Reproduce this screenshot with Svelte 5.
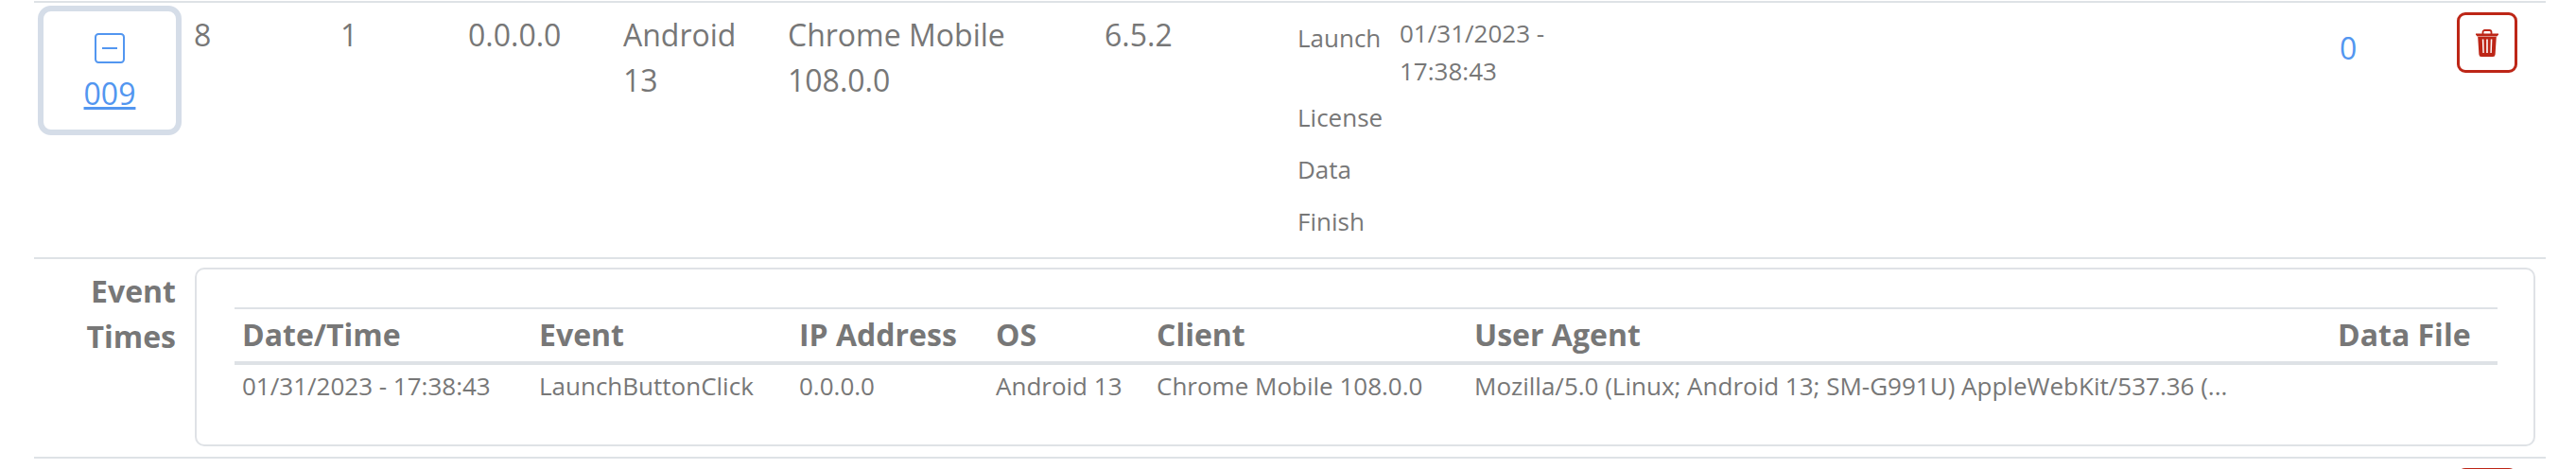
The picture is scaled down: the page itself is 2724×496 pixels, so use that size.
<script>
  const timeRows = [
    { label: 'Launch', value: '01/31/2023 - 17:38:43' },
    { label: 'License', value: '' },
    { label: 'Data', value: '' },
    { label: 'Finish', value: '' }
  ];

  const eventCols = ['Date/Time', 'Event', 'IP Address', 'OS', 'Client', 'User Agent', 'Data File'];
  const eventWidths = [313, 275, 208, 170, 336, 913, 178];
  const eventRow = [
    '01/31/2023 - 17:38:43',
    'LaunchButtonClick',
    '0.0.0.0',
    'Android 13',
    'Chrome Mobile 108.0.0',
    'Mozilla/5.0 (Linux; Android 13; SM-G991U) AppleWebKit/537.36 (...',
    ''
  ];
</script>

{#snippet trash()}
  <svg class="trash" viewBox="0 0 24 29" aria-hidden="true">
    <path d="M7.5 5V3a2 2 0 0 1 2-2h5a2 2 0 0 1 2 2v2" fill="none" stroke="currentColor" stroke-width="1.8" />
    <path d="M0 4.5h24v1.2l-1.6 1.8H1.600L0 5.700z" fill="currentColor" />
    <path
      fill-rule="evenodd"
      fill="currentColor"
      d="M2.200 8h19.600l-1.200 18.500a2.600 2.600 0 0 1-2.600 2.500H6a2.600 2.600 0 0 1-2.600-2.500zM6.800 10.500l.6 14.500h1.400l-.4-14.500zM11.200 10.500V25h1.600V10.500zM15.800 10.500l-.4 14.500h1.400l.6-14.500z"
    />
  </svg>
{/snippet}

<div class="page">
  <table class="log">
    <colgroup>
      <col style="width: 169px" />
      <col style="width: 155px" />
      <col style="width: 135px" />
      <col style="width: 164px" />
      <col style="width: 174px" />
      <col style="width: 335px" />
      <col style="width: 204px" />
      <col style="width: 1102px" />
      <col style="width: 124px" />
      <col style="width: 94px" />
    </colgroup>
    <tbody>
      <tr>
        <td class="toggle-cell">
          <div class="toggle">
            <svg class="dash" viewBox="0 0 16 16" aria-hidden="true">
              <rect x="0.500" y="0.500" width="15" height="15" rx="1.600" fill="none" stroke="currentColor" stroke-width="1" />
              <path d="M4 8h8" stroke="currentColor" stroke-width="1" />
            </svg>
            <a href="#009">009</a>
          </div>
        </td>
        <td>8</td>
        <td>1</td>
        <td>0.0.0.0</td>
        <td class="os">Android 13</td>
        <td>Chrome Mobile 108.0.0</td>
        <td>6.5.2</td>
        <td class="times-cell">
          <div class="times">
            {#each timeRows as row}
              <span class="time-label">{row.label}</span>
              <span class="time-value">{row.value}</span>
            {/each}
          </div>
        </td>
        <td class="count"><a href="#0">0</a></td>
        <td><button class="delete" aria-label="Delete">{@render trash()}</button></td>
      </tr>
      <tr>
        <td colspan="10" class="detail-cell">
          <div class="detail">
            <div class="detail-label">Event Times</div>
            <div class="card">
              <table class="events">
                <colgroup>
                  {#each eventWidths as w}
                    <col style="width: {w}px" />
                  {/each}
                </colgroup>
                <thead>
                  <tr>
                    {#each eventCols as col}
                      <th>{col}</th>
                    {/each}
                  </tr>
                </thead>
                <tbody>
                  <tr>
                    {#each eventRow as value}
                      <td>{value}</td>
                    {/each}
                  </tr>
                </tbody>
              </table>
            </div>
          </div>
        </td>
      </tr>
      <tr>
        <td colspan="9"></td>
        <td><button class="delete" aria-label="Delete">{@render trash()}</button></td>
      </tr>
    </tbody>
  </table>
</div>

<style>
  :global(body) {
    margin: 0;
    background: #fff;
  }

  .page {
    height: 496px;
    overflow: hidden;
    padding: 1px 0 0 36px;
    box-sizing: border-box;
    font-family: "Open Sans", sans-serif;
    color: #777;
  }

  a {
    color: #5296f0;
  }

  .log {
    width: 2656px;
    table-layout: fixed;
    border-collapse: separate;
    border-spacing: 0;
    font-size: 32px;
    line-height: 48px;
  }

  .log > tbody > tr > td {
    border-top: 2px solid #dee2e6;
    padding: 10px 8px 0 0;
    vertical-align: top;
  }

  .log > tbody > tr > .toggle-cell {
    padding: 3px 0 0 4px;
  }

  .log > tbody > tr > .os {
    padding-right: 30px;
  }

  .toggle {
    width: 152px;
    height: 137px;
    box-sizing: border-box;
    border: 6px solid #d5dde8;
    border-radius: 14px;
    padding-top: 23px;
    display: flex;
    flex-direction: column;
    align-items: center;
    gap: 8px;
  }

  .toggle a {
    line-height: 48px;
  }

  .dash {
    width: 32px;
    height: 32px;
    color: #5296f0;
    display: block;
  }

  .log > tbody > tr > .times-cell {
    padding: 12px 0 8px;
  }

  .times {
    display: grid;
    grid-template-columns: 108px 182px;
    font-size: 26px;
    line-height: 40px;
  }

  .time-label {
    padding: 5px 0 10px;
  }

  .time-value {
    padding-bottom: 4px;
  }

  .log > tbody > tr > .count {
    padding-top: 24px;
  }

  .count a {
    text-decoration: none;
  }

  .delete {
    width: 64px;
    height: 64px;
    padding: 0;
    box-sizing: border-box;
    border: 3px solid #bd2617;
    border-radius: 9px;
    background: #fff;
    color: #bd2617;
    display: flex;
    align-items: center;
    justify-content: center;
  }

  .trash {
    width: 24px;
    height: 29px;
    display: block;
  }

  .log > tbody > tr > .detail-cell {
    padding: 9px 11px 11px 0;
  }

  .detail {
    display: flex;
    align-items: flex-start;
  }

  .detail-label {
    width: 150px;
    margin-right: 20px;
    padding-top: 1px;
    text-align: right;
    font-weight: 700;
  }

  .card {
    flex: 1;
    box-sizing: border-box;
    height: 189px;
    border: 2px solid #dfe2e6;
    border-radius: 10px;
    padding: 40px 37px 0 40px;
  }

  .events {
    width: 2393px;
    table-layout: fixed;
    border-collapse: separate;
    border-spacing: 0;
  }

  .events th {
    border-top: 2px solid #dee2e6;
    border-bottom: 4px solid #dee2e6;
    padding: 3px 8px 4px 9px;
    text-align: left;
    font-weight: 700;
    white-space: nowrap;
  }

  .events td {
    padding: 2px 8px 0 9px;
    font-size: 26px;
    line-height: 40px;
    white-space: nowrap;
  }

  .events th:first-child,
  .events td:first-child {
    padding-left: 8px;
  }
</style>
